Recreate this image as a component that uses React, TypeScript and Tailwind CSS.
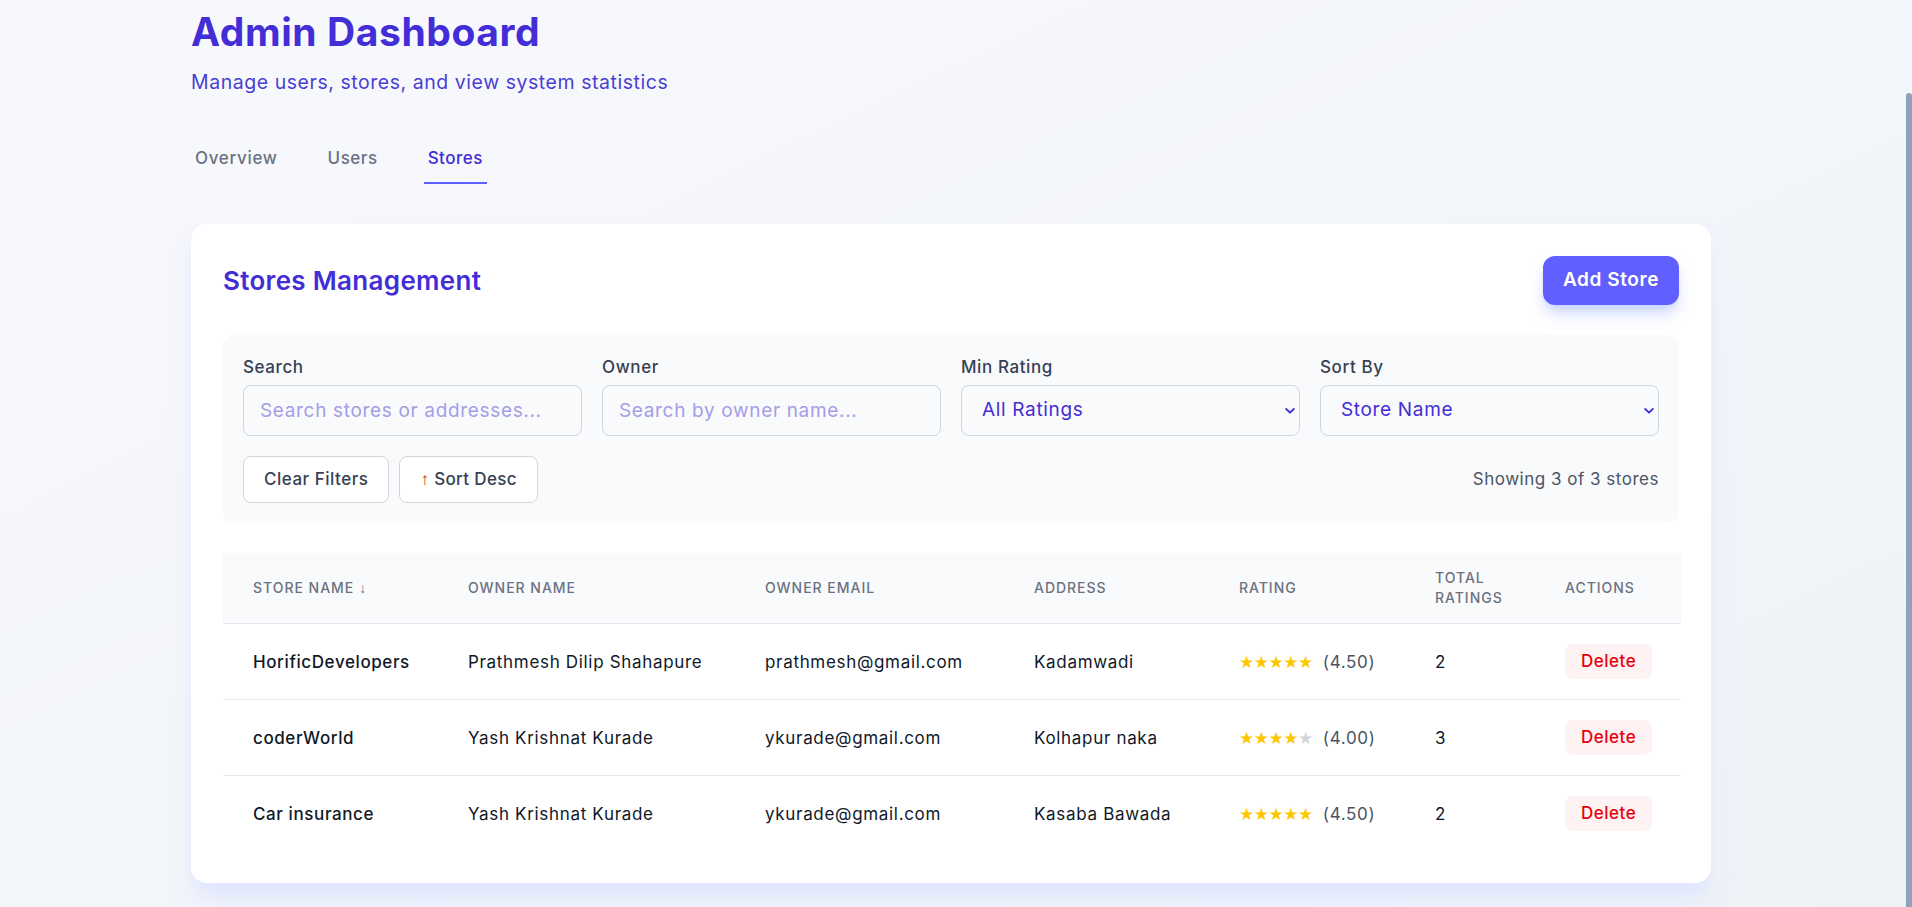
import React from "react";

type Store = {
  name: string;
  owner: string;
  email: string;
  address: string;
  rating: number;
  stars: number;
  total: number;
};

const stores: Store[] = [
  { name: "HorificDevelopers", owner: "Prathmesh Dilip Shahapure", email: "prathmesh@gmail.com", address: "Kadamwadi", rating: 4.5, stars: 5, total: 2 },
  { name: "coderWorld", owner: "Yash Krishnat Kurade", email: "ykurade@gmail.com", address: "Kolhapur naka", rating: 4.0, stars: 4, total: 3 },
  { name: "Car insurance", owner: "Yash Krishnat Kurade", email: "ykurade@gmail.com", address: "Kasaba Bawada", rating: 4.5, stars: 5, total: 2 },
];

function Chevron() {
  return (
    <svg className="pointer-events-none absolute right-[5px] top-1/2 -translate-y-1/2 text-indigo-700" width="10" height="7" viewBox="0 0 10 7" fill="none">
      <path d="M1.2 1.5L5 5.2L8.8 1.5" stroke="currentColor" strokeWidth="1.8" strokeLinecap="round" strokeLinejoin="round" />
    </svg>
  );
}

function Stars({ n }: { n: number }) {
  return (
    <span className="font-['DejaVu_Sans',sans-serif] text-[17px] leading-6 tracking-[-0.5px]">
      {[0, 1, 2, 3, 4].map((i) => (
        <span key={i} className={i < n ? "text-yellow-400" : "text-gray-300"}>
          ★
        </span>
      ))}
    </span>
  );
}

const headers = ["Store Name", "Owner Name", "Owner Email", "Address", "Rating", "Total Ratings", "Actions"];

export default function App() {
  return (
    <div className="relative h-screen overflow-hidden bg-linear-to-br from-[#f8f9fd] to-[#eef2f7] font-['Inter','Noto_Sans',sans-serif]">
      <div className="pr-2.5">
        <div className="mx-auto w-[1520px] pt-3 pb-[25px]">
          <h1 className="text-[39px] font-bold leading-10 tracking-[0.015em] text-indigo-700">Admin Dashboard</h1>
          <p className="mt-4 text-[19.5px] leading-7 tracking-[0.028em] text-[#4a3fd2]">
            Manage users, stores, and view system statistics
          </p>

          <nav className="mt-9.5 flex gap-[42px]">
            <button className="border-b-2 border-transparent px-1 py-3 text-[17px] font-medium leading-6 tracking-[0.04em] text-gray-500">Overview</button>
            <button className="border-b-2 border-transparent px-1 py-3 text-[17px] font-medium leading-6 tracking-[0.03em] text-gray-500">Users</button>
            <button className="border-b-2 border-indigo-500 px-1 py-3 text-[17px] font-medium leading-6 tracking-[0.03em] text-indigo-700">Stores</button>
          </nav>

          <div className="mt-10 rounded-2xl bg-white p-8 shadow-xl shadow-indigo-100">
            <div className="mb-7.5 flex items-center justify-between">
              <h2 className="text-[26px] font-semibold leading-8 tracking-[0.012em] text-indigo-700">Stores Management</h2>
              <button className="h-[49px] rounded-xl bg-indigo-500 px-5 text-[19px] font-semibold tracking-[0.03em] text-white shadow-lg shadow-indigo-200">
                Add Store
              </button>
            </div>

            <div className="rounded-xl bg-gray-50 p-5">
              <div className="grid grid-cols-4 gap-5">
                <div>
                  <label className="mb-1.5 block text-[17px] font-medium leading-6 tracking-[0.035em] text-gray-700">Search</label>
                  <input
                    className="h-[51px] w-full rounded-lg border border-gray-300 bg-gray-50 px-4 text-[19px] tracking-[0.035em] text-indigo-700 outline-none placeholder:text-[#a59de6]"
                    placeholder="Search stores or addresses..."
                  />
                </div>
                <div>
                  <label className="mb-1.5 block text-[17px] font-medium leading-6 tracking-[0.035em] text-gray-700">Owner</label>
                  <input
                    className="h-[51px] w-full rounded-lg border border-gray-300 bg-gray-50 px-4 text-[19px] tracking-[0.035em] text-indigo-700 outline-none placeholder:text-[#a59de6]"
                    placeholder="Search by owner name..."
                  />
                </div>
                <div>
                  <label className="mb-1.5 block text-[17px] font-medium leading-6 tracking-[0.035em] text-gray-700">Min Rating</label>
                  <div className="relative">
                    <select className="h-[51px] w-full appearance-none rounded-lg border border-gray-300 bg-gray-50 pl-5 pr-4 text-[19px] tracking-[0.035em] text-indigo-700 outline-none">
                      <option>All Ratings</option>
                    </select>
                    <Chevron />
                  </div>
                </div>
                <div>
                  <label className="mb-1.5 block text-[17px] font-medium leading-6 tracking-[0.035em] text-gray-700">Sort By</label>
                  <div className="relative">
                    <select className="h-[51px] w-full appearance-none rounded-lg border border-gray-300 bg-gray-50 pl-5 pr-4 text-[19px] tracking-[0.035em] text-indigo-700 outline-none">
                      <option>Store Name</option>
                    </select>
                    <Chevron />
                  </div>
                </div>
              </div>

              <div className="mt-5 flex items-center justify-between">
                <div className="flex gap-2.5">
                  <button className="h-[47px] rounded-lg border border-gray-300 bg-white px-5 text-[17px] font-medium tracking-[0.03em] text-gray-700">
                    Clear Filters
                  </button>
                  <button className="h-[47px] rounded-lg border border-gray-300 bg-white px-5 text-[17px] font-medium tracking-[0.02em] text-gray-700">
                    <span className="font-['Liberation_Sans',sans-serif] text-orange-700">↑</span> Sort Desc
                  </button>
                </div>
                <span className="text-[17px] tracking-[0.03em] text-gray-600">Showing 3 of 3 stores</span>
              </div>
            </div>

            <table className="mt-7.5 w-full table-fixed border-collapse">
              <colgroup>
                <col className="w-[215px]" />
                <col className="w-[297px]" />
                <col className="w-[269px]" />
                <col className="w-[205px]" />
                <col className="w-[196px]" />
                <col className="w-[130px]" />
                <col className="w-[146px]" />
              </colgroup>
              <thead className="border-b border-gray-200 bg-gray-50">
                <tr>
                  {headers.map((h, i) => (
                    <th key={h} className="px-7.5 py-[15px] text-left text-sm font-medium uppercase leading-5 tracking-[0.07em] text-gray-500">
                      {h}
                      {i === 0 && <span className="font-['Liberation_Sans',sans-serif]"> ↓</span>}
                    </th>
                  ))}
                </tr>
              </thead>
              <tbody className="divide-y divide-gray-200">
                {stores.map((s) => (
                  <tr key={s.name}>
                    <td className="px-7.5 py-5 text-[17px] font-medium leading-6 tracking-[0.035em] text-gray-900">{s.name}</td>
                    <td className="px-7.5 py-5 text-[17px] leading-6 tracking-[0.04em] text-gray-900">{s.owner}</td>
                    <td className="px-7.5 py-5 text-[17px] leading-6 tracking-[0.04em] text-gray-900">{s.email}</td>
                    <td className="px-7.5 py-5 text-[17px] leading-6 tracking-[0.04em] text-gray-900">{s.address}</td>
                    <td className="px-7.5 py-5">
                      <div className="flex items-center">
                        <Stars n={s.stars} />
                        <span className="ml-2.5 text-[17px] leading-6 tracking-[0.04em] text-gray-600">({s.rating.toFixed(2)})</span>
                      </div>
                    </td>
                    <td className="px-7.5 py-5 text-[17px] leading-6 text-gray-900">{s.total}</td>
                    <td className="px-7.5 py-5">
                      <button className="flex h-[35px] items-center rounded-lg bg-red-50 px-4 text-[17px] font-medium tracking-[0.03em] text-red-600">
                        Delete
                      </button>
                    </td>
                  </tr>
                ))}
              </tbody>
            </table>
          </div>
        </div>
      </div>
      <div className="absolute right-0 top-[93px] bottom-0 w-1.5 rounded-t-full bg-slate-400" />
    </div>
  );
}
